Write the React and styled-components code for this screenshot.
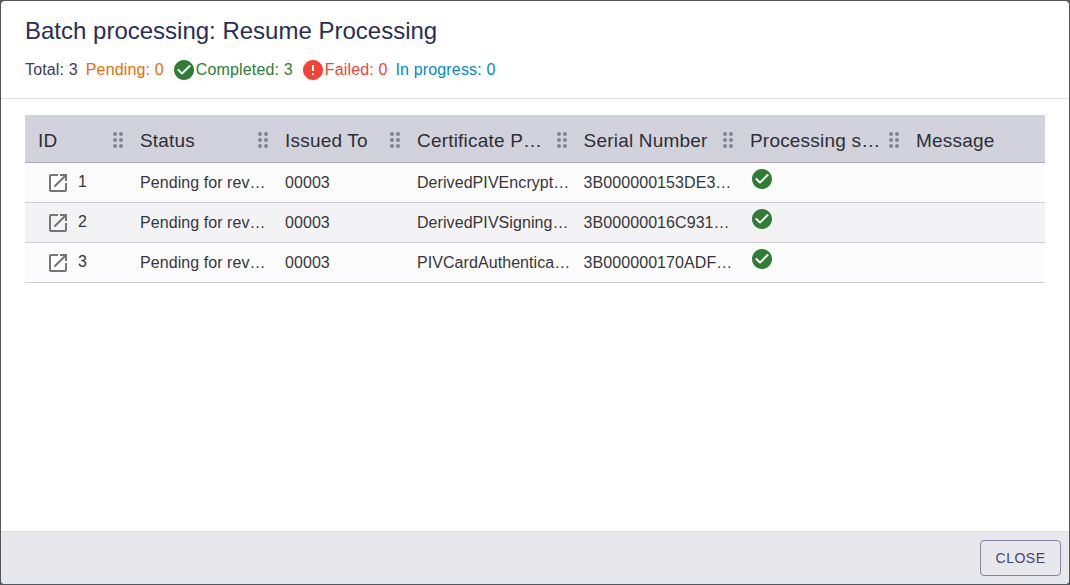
import React from 'react';
import styled, { createGlobalStyle } from 'styled-components';

const Global = createGlobalStyle`
  html, body { margin: 0; padding: 0; height: 100%; background: #3a3a42; }
  #root { height: 100%; }
  * { box-sizing: border-box; }
`;

const Page = styled.div`
  width: 1070px;
  height: 585px;
  padding: 1px;
  background: #55555c;
  font-family: "Liberation Sans", Arial, sans-serif;
  overflow: hidden;
`;

const Dialog = styled.div`
  height: 100%;
  background: #fff;
  border-radius: 4px;
  display: flex;
  flex-direction: column;
  overflow: hidden;
`;

const Header = styled.header`
  height: 98px;
  flex: none;
  padding: 16px 24px 0;
  border-bottom: 1px solid #e0e0e0;
`;

const Title = styled.h2`
  margin: 0;
  font-size: 24px;
  font-weight: 400;
  line-height: 28px;
  color: #2a2d55;
  letter-spacing: 0;
`;

const Counts = styled.div`
  display: flex;
  align-items: center;
  margin-top: 13px;
  height: 24px;
  font-size: 16px;
  letter-spacing: 0.15px;
  gap: 8px;
`;

const Count = styled.span`
  display: inline-flex;
  align-items: center;
  color: ${p => p.$color};
`;

const Body = styled.main`
  flex: 1;
  padding: 16px 24px 0;
`;

const COLS = '102px 145px 132px 166.6px 166.4px 166px 142px';

const HeadRow = styled.div`
  display: grid;
  grid-template-columns: ${COLS};
  height: 48px;
  background: #d2d2dc;
  border-bottom: 1px solid #a9a8bd;
`;

const HeadCell = styled.div`
  position: relative;
  display: flex;
  align-items: center;
  padding: 4px 22px 0 13px;
  font-size: 19px;
  color: #2e2e36;
  letter-spacing: 0.2px;
  min-width: 0;
`;

const HeadText = styled.span`
  white-space: nowrap;
  overflow: hidden;
  text-overflow: ellipsis;
`;

const Grip = styled.svg`
  position: absolute;
  right: 3px;
  top: 15px;
  width: 12px;
  height: 20px;
  fill: #84848d;
`;

const Row = styled.div`
  display: grid;
  grid-template-columns: ${COLS};
  height: 40px;
  background: ${p => (p.$alt ? '#f3f3f6' : '#fcfcfc')};
  border-bottom: 1px solid #cfcfdc;
`;

const Cell = styled.div`
  display: flex;
  align-items: center;
  padding: 0 0 0 13px;
  font-size: 16px;
  letter-spacing: 0.07px;
  color: #36363a;
  min-width: 0;
`;

const CellText = styled.span`
  white-space: nowrap;
  overflow: hidden;
  text-overflow: ellipsis;
`;

const IdCell = styled(Cell)`
  padding: 8px 0 0 21px;
  align-items: flex-start;
`;

const IdText = styled.span`
  margin-left: 8px;
  margin-top: 1px;
  line-height: 20px;
`;

const OpenIcon = styled.svg`
  width: 24px;
  height: 24px;
  fill: #757575;
  flex: none;
`;

const StatusCell = styled(Cell)`
  padding: 4px 0 0 13px;
  align-items: flex-start;
`;

const Icon = styled.svg`
  width: 24px;
  height: 24px;
  fill: ${p => p.$color};
  flex: none;
`;

const Footer = styled.footer`
  height: 53px;
  flex: none;
  background: #e7e7ec;
  border-top: 1px solid #dedee3;
  display: flex;
  align-items: center;
  justify-content: flex-end;
  padding: 0 8px 0 0;
`;

const CloseButton = styled.button`
  width: 81px;
  height: 36px;
  background: transparent;
  border: 1px solid #8583a6;
  border-radius: 4px;
  color: #45456e;
  font-family: inherit;
  font-size: 14px;
  letter-spacing: 0.5px;
  text-transform: uppercase;
`;

const CHECK = 'M12 2C6.48 2 2 6.48 2 12s4.48 10 10 10 10-4.48 10-10S17.52 2 12 2zM9.29 16.29 5.7 12.7c-.39-.39-.39-1.02 0-1.41.39-.39 1.02-.39 1.41 0L10 14.17l6.88-6.88c.39-.39 1.02-.39 1.41 0 .39.39.39 1.02 0 1.41l-7.59 7.59c-.38.39-1.02.39-1.41 0z';
const ERR = 'M12 2C6.48 2 2 6.48 2 12s4.48 10 10 10 10-4.48 10-10S17.52 2 12 2zm1 15h-2v-2h2v2zm0-4h-2V7h2v6z';
const OPEN = 'M19 19H5V5h7V3H5c-1.11 0-2 .9-2 2v14c0 1.1.89 2 2 2h14c1.1 0 2-.9 2-2v-7h-2v7zM14 3v2h3.59l-9.83 9.83 1.41 1.41L19 6.41V10h2V3h-7z';

const heads = ['ID', 'Status', 'Issued To', 'Certificate Profile', 'Serial Number', 'Processing status', 'Message'];
const rows = [
  [1, 'DerivedPIVEncryptionCertificate', '3B000000153DE3A1C2'],
  [2, 'DerivedPIVSigningCertificate', '3B00000016C931D2E4'],
  [3, 'PIVCardAuthenticationCertificate', '3B000000170ADF45B6'],
];

function GripIcon() {
  return (
    <Grip viewBox="0 0 12 20">
      {[4, 10, 16].map(y => [3, 9].map(x => <circle key={`${x}-${y}`} cx={x} cy={y} r="2" />))}
    </Grip>
  );
}

export default function App() {
  return (
    <Page>
      <Global />
      <Dialog>
        <Header>
          <Title>Batch processing: Resume Processing</Title>
          <Counts>
            <Count $color="#3a3c62">Total: 3</Count>
            <Count $color="#ef6c00">Pending: 0</Count>
            <Count $color="#2e7d32">
              <Icon $color="#2e7d32" viewBox="0 0 24 24"><path d={CHECK} /></Icon>Completed: 3
            </Count>
            <Count $color="#f44336">
              <Icon $color="#f44336" viewBox="0 0 24 24"><path d={ERR} /></Icon>Failed: 0
            </Count>
            <Count $color="#0288d1">In progress: 0</Count>
          </Counts>
        </Header>
        <Body>
          <HeadRow>
            {heads.map((h, i) => (
              <HeadCell key={h}>
                <HeadText>{h}</HeadText>
                {i < heads.length - 1 && <GripIcon />}
              </HeadCell>
            ))}
          </HeadRow>
          {rows.map(([id, profile, serial], i) => (
            <Row key={id} $alt={i === 1}>
              <IdCell>
                <OpenIcon viewBox="0 0 24 24"><path d={OPEN} /></OpenIcon>
                <IdText>{id}</IdText>
              </IdCell>
              <Cell><CellText>Pending for revocation</CellText></Cell>
              <Cell><CellText>00003</CellText></Cell>
              <Cell><CellText>{profile}</CellText></Cell>
              <Cell><CellText>{serial}</CellText></Cell>
              <StatusCell>
                <Icon $color="#2e7d32" viewBox="0 0 24 24"><path d={CHECK} /></Icon>
              </StatusCell>
              <Cell />
            </Row>
          ))}
        </Body>
        <Footer>
          <CloseButton>Close</CloseButton>
        </Footer>
      </Dialog>
    </Page>
  );
}
